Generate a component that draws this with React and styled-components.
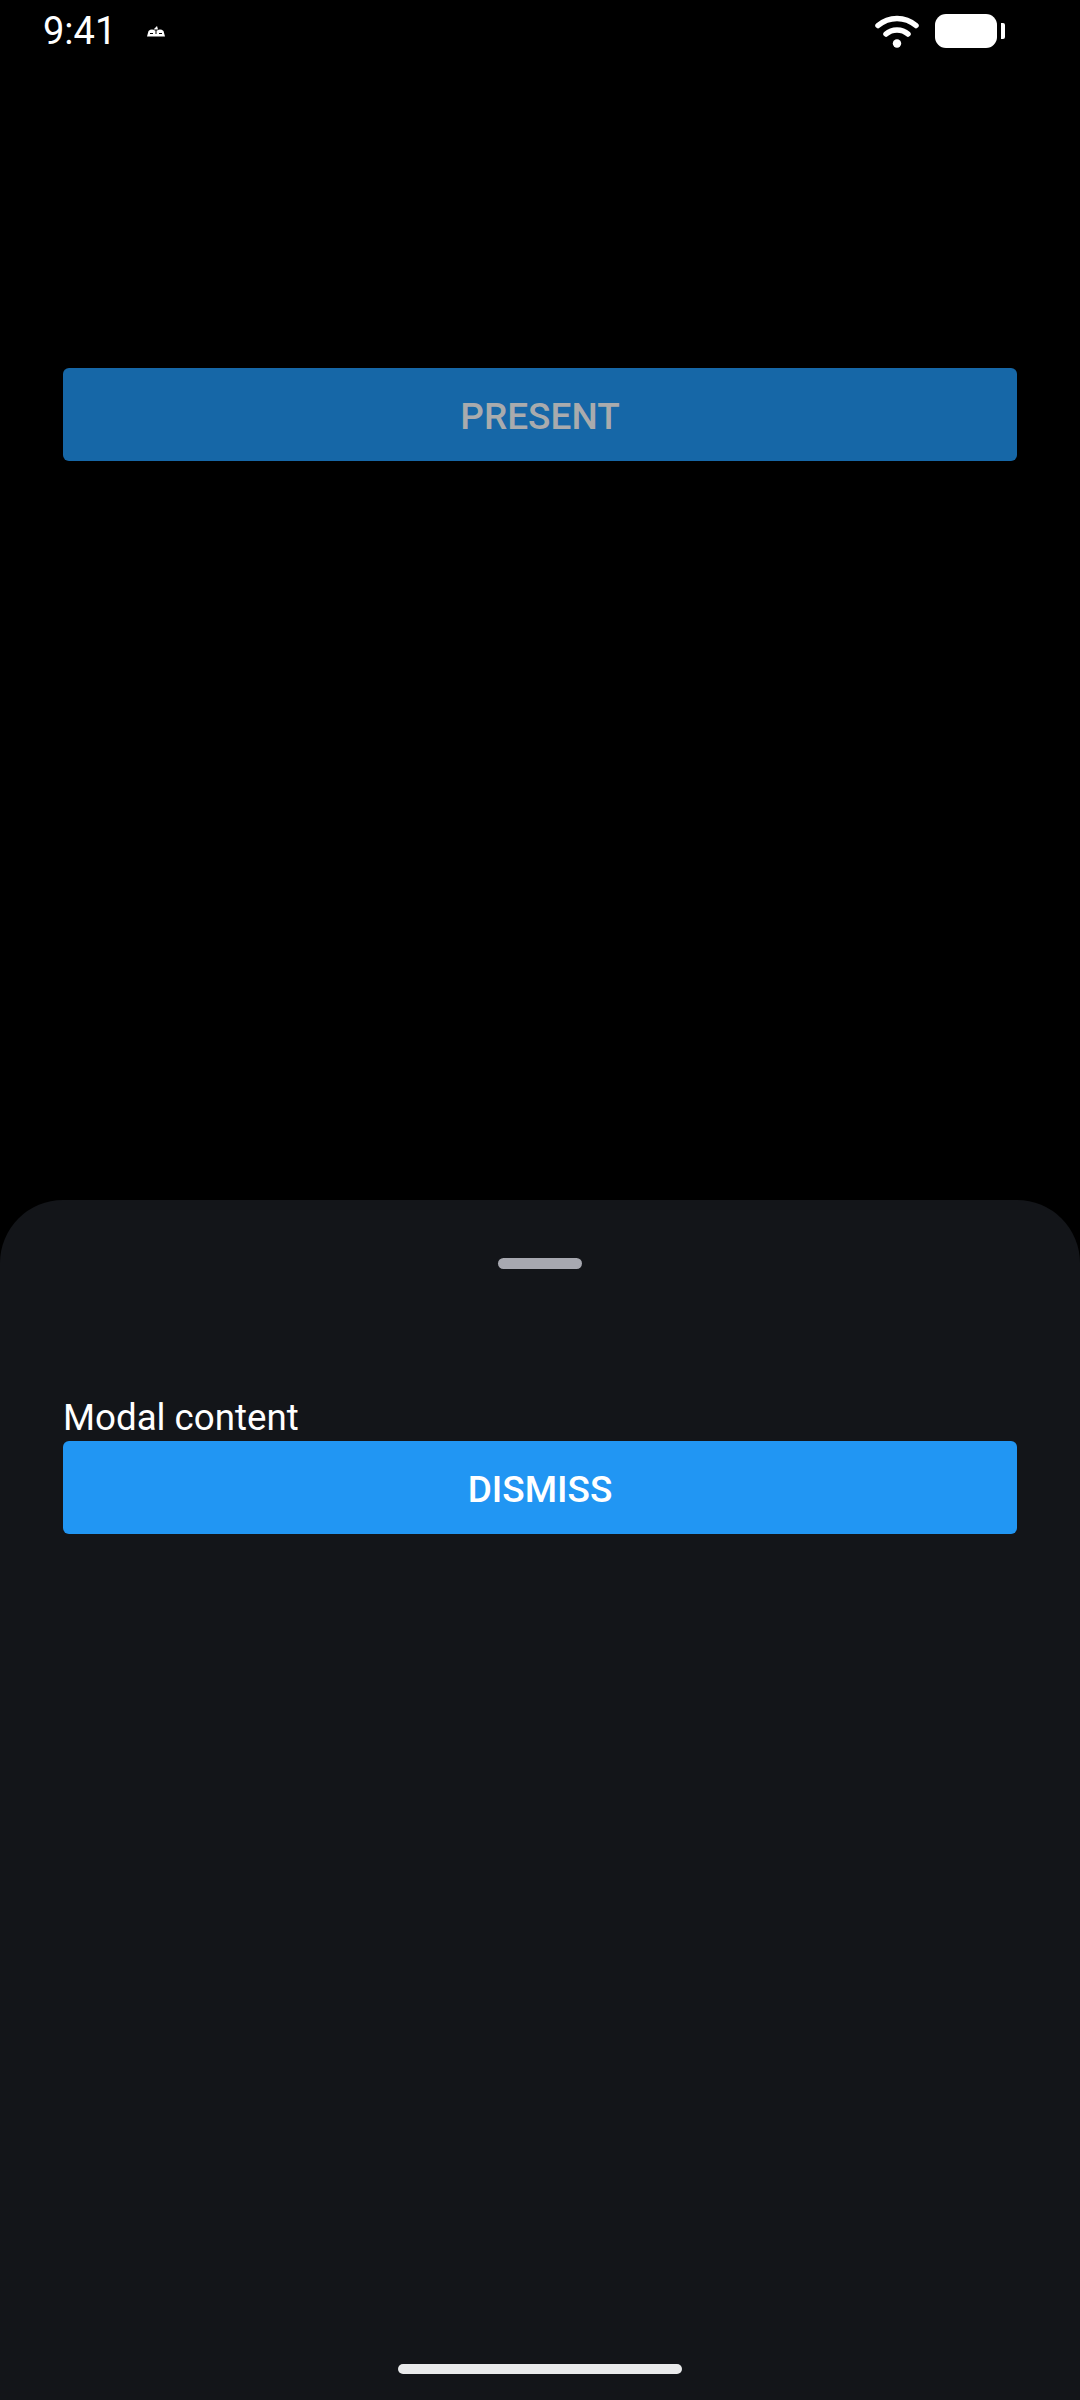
import React from "react";
import styled, { createGlobalStyle } from "styled-components";

const GlobalStyle = createGlobalStyle`
  html, body {
    margin: 0;
    padding: 0;
    background: #000000;
  }
`;

export default function App() {
  return (
    <>
      <GlobalStyle />
      <Screen>
        <StatusBar>
          <StatusLeft>
            <Clock>9:41</Clock>
            <BookIcon viewBox="0 0 18 11">
              <path
                d="M0 10.5 L1.5 5 Q4.5 2.5 8 4.5 L8.5 4.5 L8.5 8 L9.5 8 L9.5 4.5 L10 4.5 Q13.5 2.5 16.5 5 L18 10.5 Z"
                fill="#fff"
              />
              <path d="M6.5 3.5 L10 0 L11 3.5 Z" fill="#fff" />
              <rect x="3" y="7" width="3" height="1" fill="#000" />
              <rect x="12" y="7" width="3" height="1" fill="#000" />
            </BookIcon>
          </StatusLeft>
          <StatusRight>
            <WifiIcon viewBox="0 0 44 33">
              <path
                d="M3 10.5 C14 1 30 1 41 10.5"
                fill="none"
                stroke="#fff"
                strokeWidth="5.5"
                strokeLinecap="round"
              />
              <path
                d="M11 19 C17 13.5 27 13.5 33 19"
                fill="none"
                stroke="#fff"
                strokeWidth="5.5"
                strokeLinecap="round"
              />
              <circle cx="22" cy="28.5" r="4.2" fill="#fff" />
            </WifiIcon>
            <Battery>
              <BatteryBody />
              <BatteryNub />
            </Battery>
          </StatusRight>
        </StatusBar>
        <Main>
          <PresentButton>PRESENT</PresentButton>
        </Main>
        <Sheet>
          <Handle />
          <SheetContent>
            <ModalText>Modal content</ModalText>
            <DismissButton>DISMISS</DismissButton>
          </SheetContent>
          <HomeBar />
        </Sheet>
      </Screen>
    </>
  );
}

const Screen = styled.div`
  width: 1080px;
  height: 2400px;
  display: flex;
  flex-direction: column;
  background: #000000;
  overflow: hidden;
  font-family: "Roboto", sans-serif;
`;

const StatusBar = styled.div`
  height: 62px;
  display: flex;
  align-items: center;
  justify-content: space-between;
  padding: 0 75px 0 43px;
  box-sizing: border-box;
`;

const StatusLeft = styled.div`
  display: flex;
  align-items: center;
  gap: 31px;
`;

const Clock = styled.div`
  font-size: 38px;
  color: #ffffff;
`;

const BookIcon = styled.svg`
  width: 18px;
  height: 11px;
  margin-top: 1px;
`;

const StatusRight = styled.div`
  display: flex;
  align-items: center;
  gap: 16px;
`;

const WifiIcon = styled.svg`
  width: 44px;
  height: 33px;
`;

const Battery = styled.div`
  display: flex;
  align-items: center;
  gap: 4px;
`;

const BatteryBody = styled.div`
  width: 62px;
  height: 34px;
  border-radius: 11px;
  background: #ffffff;
`;

const BatteryNub = styled.div`
  width: 4px;
  height: 16px;
  border-radius: 0 2px 2px 0;
  background: #ffffff;
`;

const Main = styled.div`
  flex: 1;
  padding: 306px 63px 0;
`;

const ActionButton = styled.div`
  height: 93px;
  box-sizing: border-box;
  padding-top: 3px;
  display: flex;
  align-items: center;
  justify-content: center;
  border-radius: 6px;
  font-size: 37px;
  font-weight: 500;
`;

const PresentButton = styled(ActionButton)`
  background: #1667a7;
  color: #a9abad;
`;

const DismissButton = styled(ActionButton)`
  background: #2196f3;
  color: #ffffff;
`;

const Sheet = styled.div`
  height: 1200px;
  display: flex;
  flex-direction: column;
  align-items: center;
  background: #131519;
  border-radius: 63px 63px 0 0;
`;

const Handle = styled.div`
  width: 84px;
  height: 11px;
  margin-top: 58px;
  border-radius: 6px;
  background: #a7a8b0;
`;

const SheetContent = styled.div`
  flex: 1;
  align-self: stretch;
  padding: 130px 63px 0;
`;

const ModalText = styled.div`
  margin-bottom: 4px;
  font-size: 36.7px;
  line-height: 38px;
  color: #ffffff;
`;

const HomeBar = styled.div`
  width: 284px;
  height: 10px;
  margin-bottom: 26px;
  border-radius: 5px;
  background: #e9eaeb;
`;
